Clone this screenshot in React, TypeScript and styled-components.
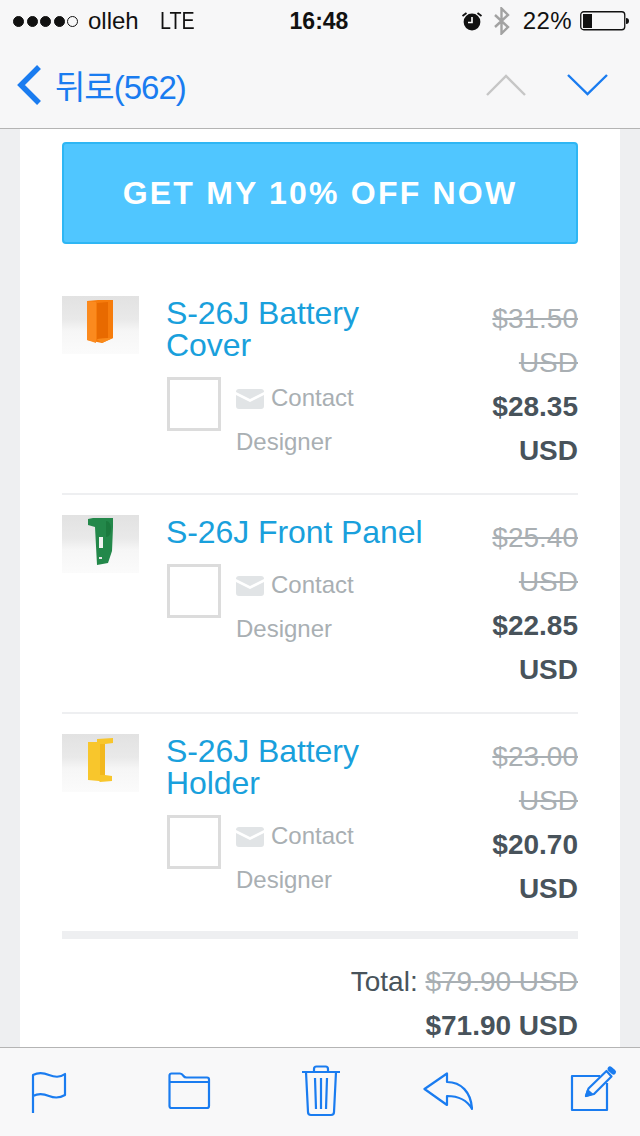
import React from "react";
import styled, { createGlobalStyle } from "styled-components";

const GlobalStyle = createGlobalStyle`
  html, body {
    margin: 0;
    padding: 0;
    background: #eeeff1;
    font-family: "Liberation Sans", "Noto Sans CJK KR", sans-serif;
  }
`;

const Page = styled.div`
  width: 640px;
  height: 1136px;
  display: flex;
  flex-direction: column;
  overflow: hidden;
`;

const Header = styled.header`
  flex: none;
  height: 128px;
  background: #f7f7f8;
  border-bottom: 1px solid #b4b4b4;
`;

const StatusBar = styled.div`
  height: 42px;
  padding: 0 11px 0 13px;
  display: grid;
  grid-template-columns: 1fr auto 1fr;
  align-items: center;
  color: #111;
  font-size: 24px;
`;

const StatusLeft = styled.div`
  display: flex;
  align-items: center;
`;

const StatusRight = styled.div`
  display: flex;
  align-items: center;
  justify-content: flex-end;
`;

const Dot = styled.span<{ $empty?: boolean }>`
  width: 11px;
  height: 11px;
  margin-right: 2.6px;
  border-radius: 50%;
  box-sizing: border-box;
  background: ${({ $empty }) => ($empty ? "transparent" : "#111")};
  border: 1px solid #111;
`;

const Carrier = styled.span`
  margin-left: 7px;
`;

const Network = styled.span`
  display: inline-block;
  margin-left: 21px;
  transform: scaleX(0.82);
  transform-origin: left center;
`;

const Clock = styled.span`
  font-weight: 700;
  font-size: 23px;
  margin-right: 4px;
`;

const Percent = styled.span`
  margin: 0 8px 0 13px;
  letter-spacing: 0.4px;
`;

const NavBar = styled.nav`
  height: 86px;
  padding: 0 32px 10px 16px;
  display: flex;
  align-items: center;
  color: #1a7cf0;
`;

const BackLabel = styled.span`
  margin-left: 13px;
  font-size: 33px;
  letter-spacing: -1px;
  flex: 1;
`;

const Chevron = styled.svg<{ $gap?: number }>`
  margin-left: ${({ $gap }) => $gap ?? 0}px;
`;

const Content = styled.main`
  flex: 1;
  min-height: 0;
  overflow: hidden;
  padding: 0 20px;
`;

const Card = styled.div`
  background: #fff;
  padding: 13px 42px 0;
`;

const OfferButton = styled.div`
  height: 102px;
  box-sizing: border-box;
  display: flex;
  align-items: center;
  justify-content: center;
  background: #50c6ff;
  border: 2px solid #2eb6f4;
  border-radius: 4px;
  color: #fff;
  font-size: 32px;
  font-weight: 700;
  letter-spacing: 2.2px;
`;

const List = styled.div`
  margin-top: 52px;
`;

const Row = styled.div`
  display: flex;
  padding-bottom: 20px;
  & + & {
    padding-top: 20px;
    border-top: 2px solid #eeeff1;
  }
`;

const Thumb = styled.div`
  flex: none;
  width: 77px;
  height: 58px;
  margin-right: 28px;
  background: linear-gradient(#e2e2e2 0%, #e9e9e9 40%, #f6f6f6 60%, #fbfbfb 100%);
`;

const ThumbArt = styled.svg`
  display: block;
  filter: blur(0.6px);
`;

const Details = styled.div`
  flex: none;
  width: 270px;
`;

const Title = styled.div`
  margin: 1px 0 0 -1px;
  color: #19a0dc;
  font-size: 32px;
  line-height: 32px;
  letter-spacing: -0.08px;
`;

const Contact = styled.div`
  margin-top: 15px;
  color: #a9afb3;
  font-size: 24px;
  line-height: 44px;
`;

const Avatar = styled.div`
  float: left;
  width: 54px;
  height: 54px;
  box-sizing: border-box;
  margin: 1px 15px 0 0;
  border: 3px solid #dcdcdc;
  background: #fff;
`;

const Envelope = styled.svg`
  vertical-align: -3px;
  margin-right: 7px;
`;

const Price = styled.div`
  flex: 1;
  min-width: 0;
  margin-top: 1px;
  text-align: right;
  font-size: 28px;
  line-height: 44px;
`;

const OldPrice = styled.div`
  color: #a9afb3;
  text-decoration: line-through;
`;

const NewPrice = styled.div`
  color: #48535b;
  font-weight: 700;
`;

const Totals = styled.div`
  border-top: 8px solid #eeeff1;
  padding-top: 21px;
  text-align: right;
  font-size: 28px;
  line-height: 44px;
  color: #48535b;
`;

const TotalOld = styled.span`
  color: #a9afb3;
  text-decoration: line-through;
`;

const Toolbar = styled.footer`
  flex: none;
  height: 88px;
  display: flex;
  padding-left: 31px;
  background: #f8f8f9;
  border-top: 1px solid #b4b4b4;
`;

const ToolIcon = styled.svg<{ $gap?: number }>`
  flex: none;
  height: 88px;
  margin-left: ${({ $gap }) => $gap ?? 0}px;
  fill: none;
  stroke: #1a7cf0;
  stroke-width: 2.2;
  stroke-linejoin: round;
`;

const products = [
  {
    name: "S-26J Battery Cover",
    was: "$31.50 USD",
    now: "$28.35 USD",
    art: (
      <ThumbArt width="77" height="58" viewBox="0 0 77 58">
        <path d="M25 5l11-1h15v38l-11 5-15-3z" fill="#f67c0c" />
        <path d="M25 5l9 1v41l-9-3z" fill="#fb8a1e" />
        <path d="M35 7l11-1v36l-11 1z" fill="#e86a00" />
        <path d="M35 43l11-1 5 0-11 5z" fill="#f98a1a" />
      </ThumbArt>
    ),
  },
  {
    name: "S-26J Front Panel",
    was: "$25.40 USD",
    now: "$22.85 USD",
    art: (
      <ThumbArt width="77" height="58" viewBox="0 0 77 58">
        <path d="M26 4l5-1h20v9l-1 24-4 12-11 2-2-38-7-2z" fill="#23884a" />
        <path d="M44 6c3 0 5 3 5 8s-2 8-5 8z" fill="#1b7a3e" />
        <rect x="37" y="22" width="4" height="11" fill="#f2f2f2" />
        <rect x="37" y="42" width="3" height="2" fill="#e6e6e6" />
      </ThumbArt>
    ),
  },
  {
    name: "S-26J Battery Holder",
    was: "$23.00 USD",
    now: "$20.70 USD",
    art: (
      <ThumbArt width="77" height="58" viewBox="0 0 77 58">
        <path d="M26 8h9V5l16-1v5l-8 1v31l7 1v5l-12 1-1-1-11-1z" fill="#f8c62c" />
        <path d="M38 10h5v31h-5z" fill="#f2b81e" />
      </ThumbArt>
    ),
  },
];

const App: React.FC = () => {
  return (
    <Page>
      <GlobalStyle />
      <Header>
        <StatusBar>
          <StatusLeft>
            <Dot />
            <Dot />
            <Dot />
            <Dot />
            <Dot $empty />
            <Carrier>olleh</Carrier>
            <Network>LTE</Network>
          </StatusLeft>
          <Clock>16:48</Clock>
          <StatusRight>
            <svg width="22" height="20" viewBox="0 0 22 20">
              <circle cx="11" cy="11" r="8.4" fill="#111" />
              <path d="M11 6v5.500H7" fill="none" stroke="#fff" strokeWidth="1.6" />
              <path d="M1.500 5l4-3M20.500 5l-4-3" stroke="#111" strokeWidth="1.8" />
            </svg>
            <svg width="17" height="28" viewBox="0 0 17 28" style={{ marginLeft: 10 }}>
              <path d="M2 8l13 12-6.500 6.500V1.500L15 8 2 20" fill="none" stroke="#a2a2a2" strokeWidth="2.4" />
            </svg>
            <Percent>22%</Percent>
            <svg width="49" height="20" viewBox="0 0 49 20">
              <rect x="0.75" y="0.75" width="44" height="18" rx="3" fill="none" stroke="#111" strokeWidth="1.3" />
              <rect x="3" y="3" width="9" height="14" fill="#111" />
              <path d="M46 7c2 0 3 1 3 3s-1 3-3 3z" fill="#111" />
            </svg>
          </StatusRight>
        </StatusBar>
        <NavBar>
          <svg width="26" height="42" viewBox="0 0 26 42">
            <path d="M23 3L5 21l18 18" fill="none" stroke="#1a7cf0" strokeWidth="5.5" />
          </svg>
          <BackLabel>뒤로(562)</BackLabel>
          <Chevron width="40" height="22" viewBox="0 0 40 22">
            <path d="M1 21L20 2l19 19" fill="none" stroke="#c6c6c6" strokeWidth="2.4" />
          </Chevron>
          <Chevron width="41" height="22" viewBox="0 0 41 22" $gap={41}>
            <path d="M1 1l19.500 19L40 1" fill="none" stroke="#1a7cf0" strokeWidth="2.4" />
          </Chevron>
        </NavBar>
      </Header>
      <Content>
        <Card>
          <OfferButton>GET MY 10% OFF NOW</OfferButton>
          <List>
            {products.map((p) => (
              <Row key={p.name}>
                <Thumb>{p.art}</Thumb>
                <Details>
                  <Title>{p.name}</Title>
                  <Contact>
                    <Avatar />
                    <Envelope width="28" height="20" viewBox="0 0 28 20">
                      <path d="M0 3a3 3 0 0 1 3-3h22a3 3 0 0 1 3 3L14 10z" fill="#e1e4e6" />
                      <path d="M0 6l14 7 14-7v11a3 3 0 0 1-3 3H3a3 3 0 0 1-3-3z" fill="#e1e4e6" />
                    </Envelope>
                    Contact Designer
                  </Contact>
                </Details>
                <Price>
                  <OldPrice>{p.was}</OldPrice>
                  <NewPrice>{p.now}</NewPrice>
                </Price>
              </Row>
            ))}
          </List>
          <Totals>
            Total: <TotalOld>$79.90 USD</TotalOld>
            <NewPrice>$71.90 USD</NewPrice>
          </Totals>
        </Card>
      </Content>
      <Toolbar>
        <ToolIcon width="36" viewBox="0 0 36 88">
          <path d="M2 65V27c6-3 11-2 16 0s11 3 16-1v21c-5 3-11 3-16 1s-10-3-16 0" />
        </ToolIcon>
        <ToolIcon width="44" viewBox="0 0 44 88" $gap={100}>
          <path d="M2.500 58V27.500a2 2 0 0 1 2-2H13c2 0 2.500 1 3.500 2.500.7 1 1.500 1.500 3 1.500H40a2 2 0 0 1 2 2V58a2 2 0 0 1-2 2H4.500a2 2 0 0 1-2-2zM2.500 34H42" />
        </ToolIcon>
        <ToolIcon width="40" viewBox="0 0 40 88" $gap={90}>
          <path d="M1 24h38M13 24v-3a2.500 2.500 0 0 1 2.500-2.500h9A2.500 2.500 0 0 1 27 21v3M5 24l2 40a3 3 0 0 0 3 3h20a3 3 0 0 0 3-3l2-40M14 30l1 31M20 30v31M26 30l-1 31" />
        </ToolIcon>
        <ToolIcon width="50" viewBox="0 0 50 88" $gap={82}>
          <path d="M1.500 41L24 25.500V34c14 0 24 10 25 27-5-9-13-13-25-13v9z" />
        </ToolIcon>
        <ToolIcon width="48" viewBox="0 0 48 88" $gap={97}>
          <path d="M30 28H2v34h35V35" />
          <path d="M16 48l2.500-7.500L36.500 23l5 5.500L24 46z" />
          <path d="M16 48l1.800-5.500 4 3.500z" fill="#1a7cf0" />
          <path d="M40 21l3.500 3" strokeWidth="5" strokeLinecap="round" />
        </ToolIcon>
      </Toolbar>
    </Page>
  );
};

export default App;
